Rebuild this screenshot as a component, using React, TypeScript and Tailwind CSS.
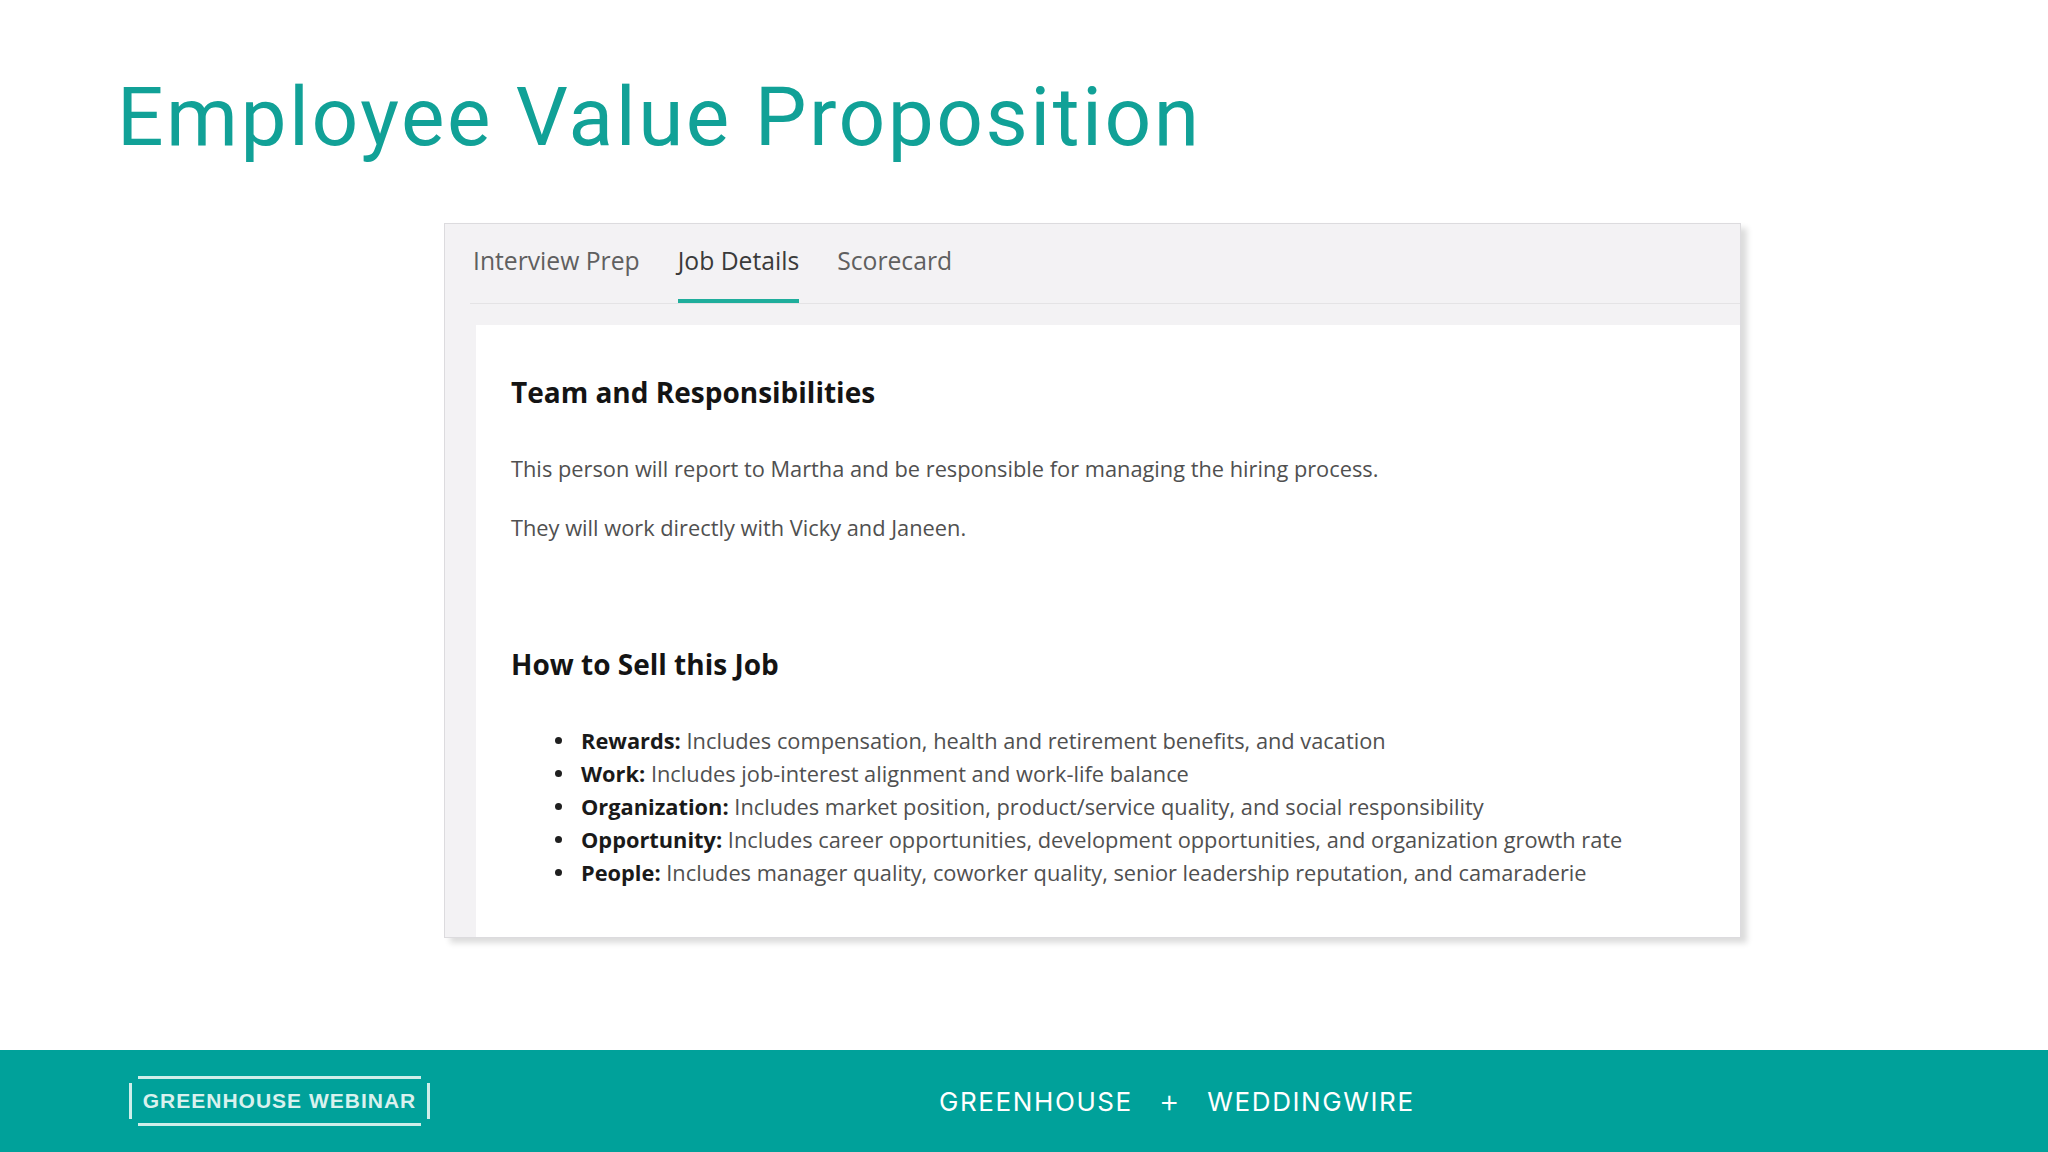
const tabs = ['Interview Prep', 'Job Details', 'Scorecard']

const sellPoints = [
  { label: 'Rewards:', text: 'Includes compensation, health and retirement benefits, and vacation' },
  { label: 'Work:', text: 'Includes job-interest alignment and work-life balance' },
  { label: 'Organization:', text: 'Includes market position, product/service quality, and social responsibility' },
  { label: 'Opportunity:', text: 'Includes career opportunities, development opportunities, and organization growth rate' },
  { label: 'People:', text: 'Includes manager quality, coworker quality, senior leadership reputation, and camaraderie' },
]

function TabBar() {
  return (
    <div className="ml-[25px] flex gap-[38px] border-b border-[#e4e3e5] pl-[3px] pt-[20px]">
      {tabs.map((tab) => {
        const active = tab === 'Job Details'
        return (
          <div key={tab} className="flex flex-col">
            <span
              className={
                active
                  ? 'text-[24.7px] leading-[33px] text-[#3a3a3a]'
                  : 'text-[24.7px] leading-[33px] text-[#5f5f5f]'
              }
            >
              {tab}
            </span>
            <div className={active ? 'mt-[22px] h-[4px] bg-[#1fae9c]' : 'mt-[22px] h-[4px]'} />
          </div>
        )
      })}
    </div>
  )
}

function JobDetails() {
  return (
    <div className="ml-[31px] mt-[21px] flex-1 bg-white pl-[35px] pt-[49px] text-[#505050]">
      <h2 className="text-[28px] font-bold leading-[36px] text-[#141414]">Team and Responsibilities</h2>
      <p className="mt-[44px] text-[21.8px] leading-[30px]">
        This person will report to Martha and be responsible for managing the hiring process.
      </p>
      <p className="mt-[29px] text-[21.8px] leading-[30px]">They will work directly with Vicky and Janeen.</p>

      <h2 className="mt-[103px] text-[28px] font-bold leading-[36px] text-[#141414]">How to Sell this Job</h2>
      <ul className="mt-[42px] flex flex-col">
        {sellPoints.map((item) => (
          <li key={item.label} className="flex items-center pl-[44px] text-[21.8px] leading-[33px]">
            <span className="mr-[19px] h-[7px] w-[7px] rounded-full bg-[#1f1f1f]" />
            <span>
              <b className="font-bold text-[#1a1a1a]">{item.label}</b> {item.text}
            </span>
          </li>
        ))}
      </ul>
    </div>
  )
}

function WebinarBadge() {
  return (
    <div className="flex w-[301px] items-center">
      <div className="h-[36px] w-[3px] bg-[#cfeeea]" />
      <div className="flex flex-1 flex-col px-[6px]">
        <div className="h-[3px] bg-[#cfeeea]" />
        <div className="py-[10px] text-center font-['Liberation_Sans',sans-serif] text-[21px] font-bold leading-[24px] tracking-[1px] text-[#d9f1ee]">
          GREENHOUSE WEBINAR
        </div>
        <div className="h-[3px] bg-[#cfeeea]" />
      </div>
      <div className="h-[36px] w-[3px] bg-[#cfeeea]" />
    </div>
  )
}

export default function App() {
  return (
    <div className="flex h-[1152px] w-[2048px] flex-col overflow-hidden bg-white font-['Open_Sans',sans-serif]">
      <h1 className="pl-[117px] pt-[76px] font-['Roboto',sans-serif] text-[82px] font-normal leading-none tracking-[2.5px] text-[#11a197]">
        Employee Value Proposition
      </h1>

      <div className="ml-[444px] mt-[65px] flex h-[715px] w-[1297px] flex-col border border-[#dcdbde] bg-[#f3f2f4] shadow-[6px_5px_6px_rgba(0,0,0,0.14)]">
        <TabBar />
        <JobDetails />
      </div>

      <footer className="mt-auto flex h-[102px] items-center bg-[#00a19a] pl-[129px]">
        <WebinarBadge />
        <div className="ml-[509px] flex items-center gap-[26px] font-['Inter',sans-serif] text-[26px] font-normal tracking-[1.6px] text-white">
          <span>GREENHOUSE</span>
          <span className="text-[32px] font-light leading-none">+</span>
          <span>WEDDINGWIRE</span>
        </div>
      </footer>
    </div>
  )
}
